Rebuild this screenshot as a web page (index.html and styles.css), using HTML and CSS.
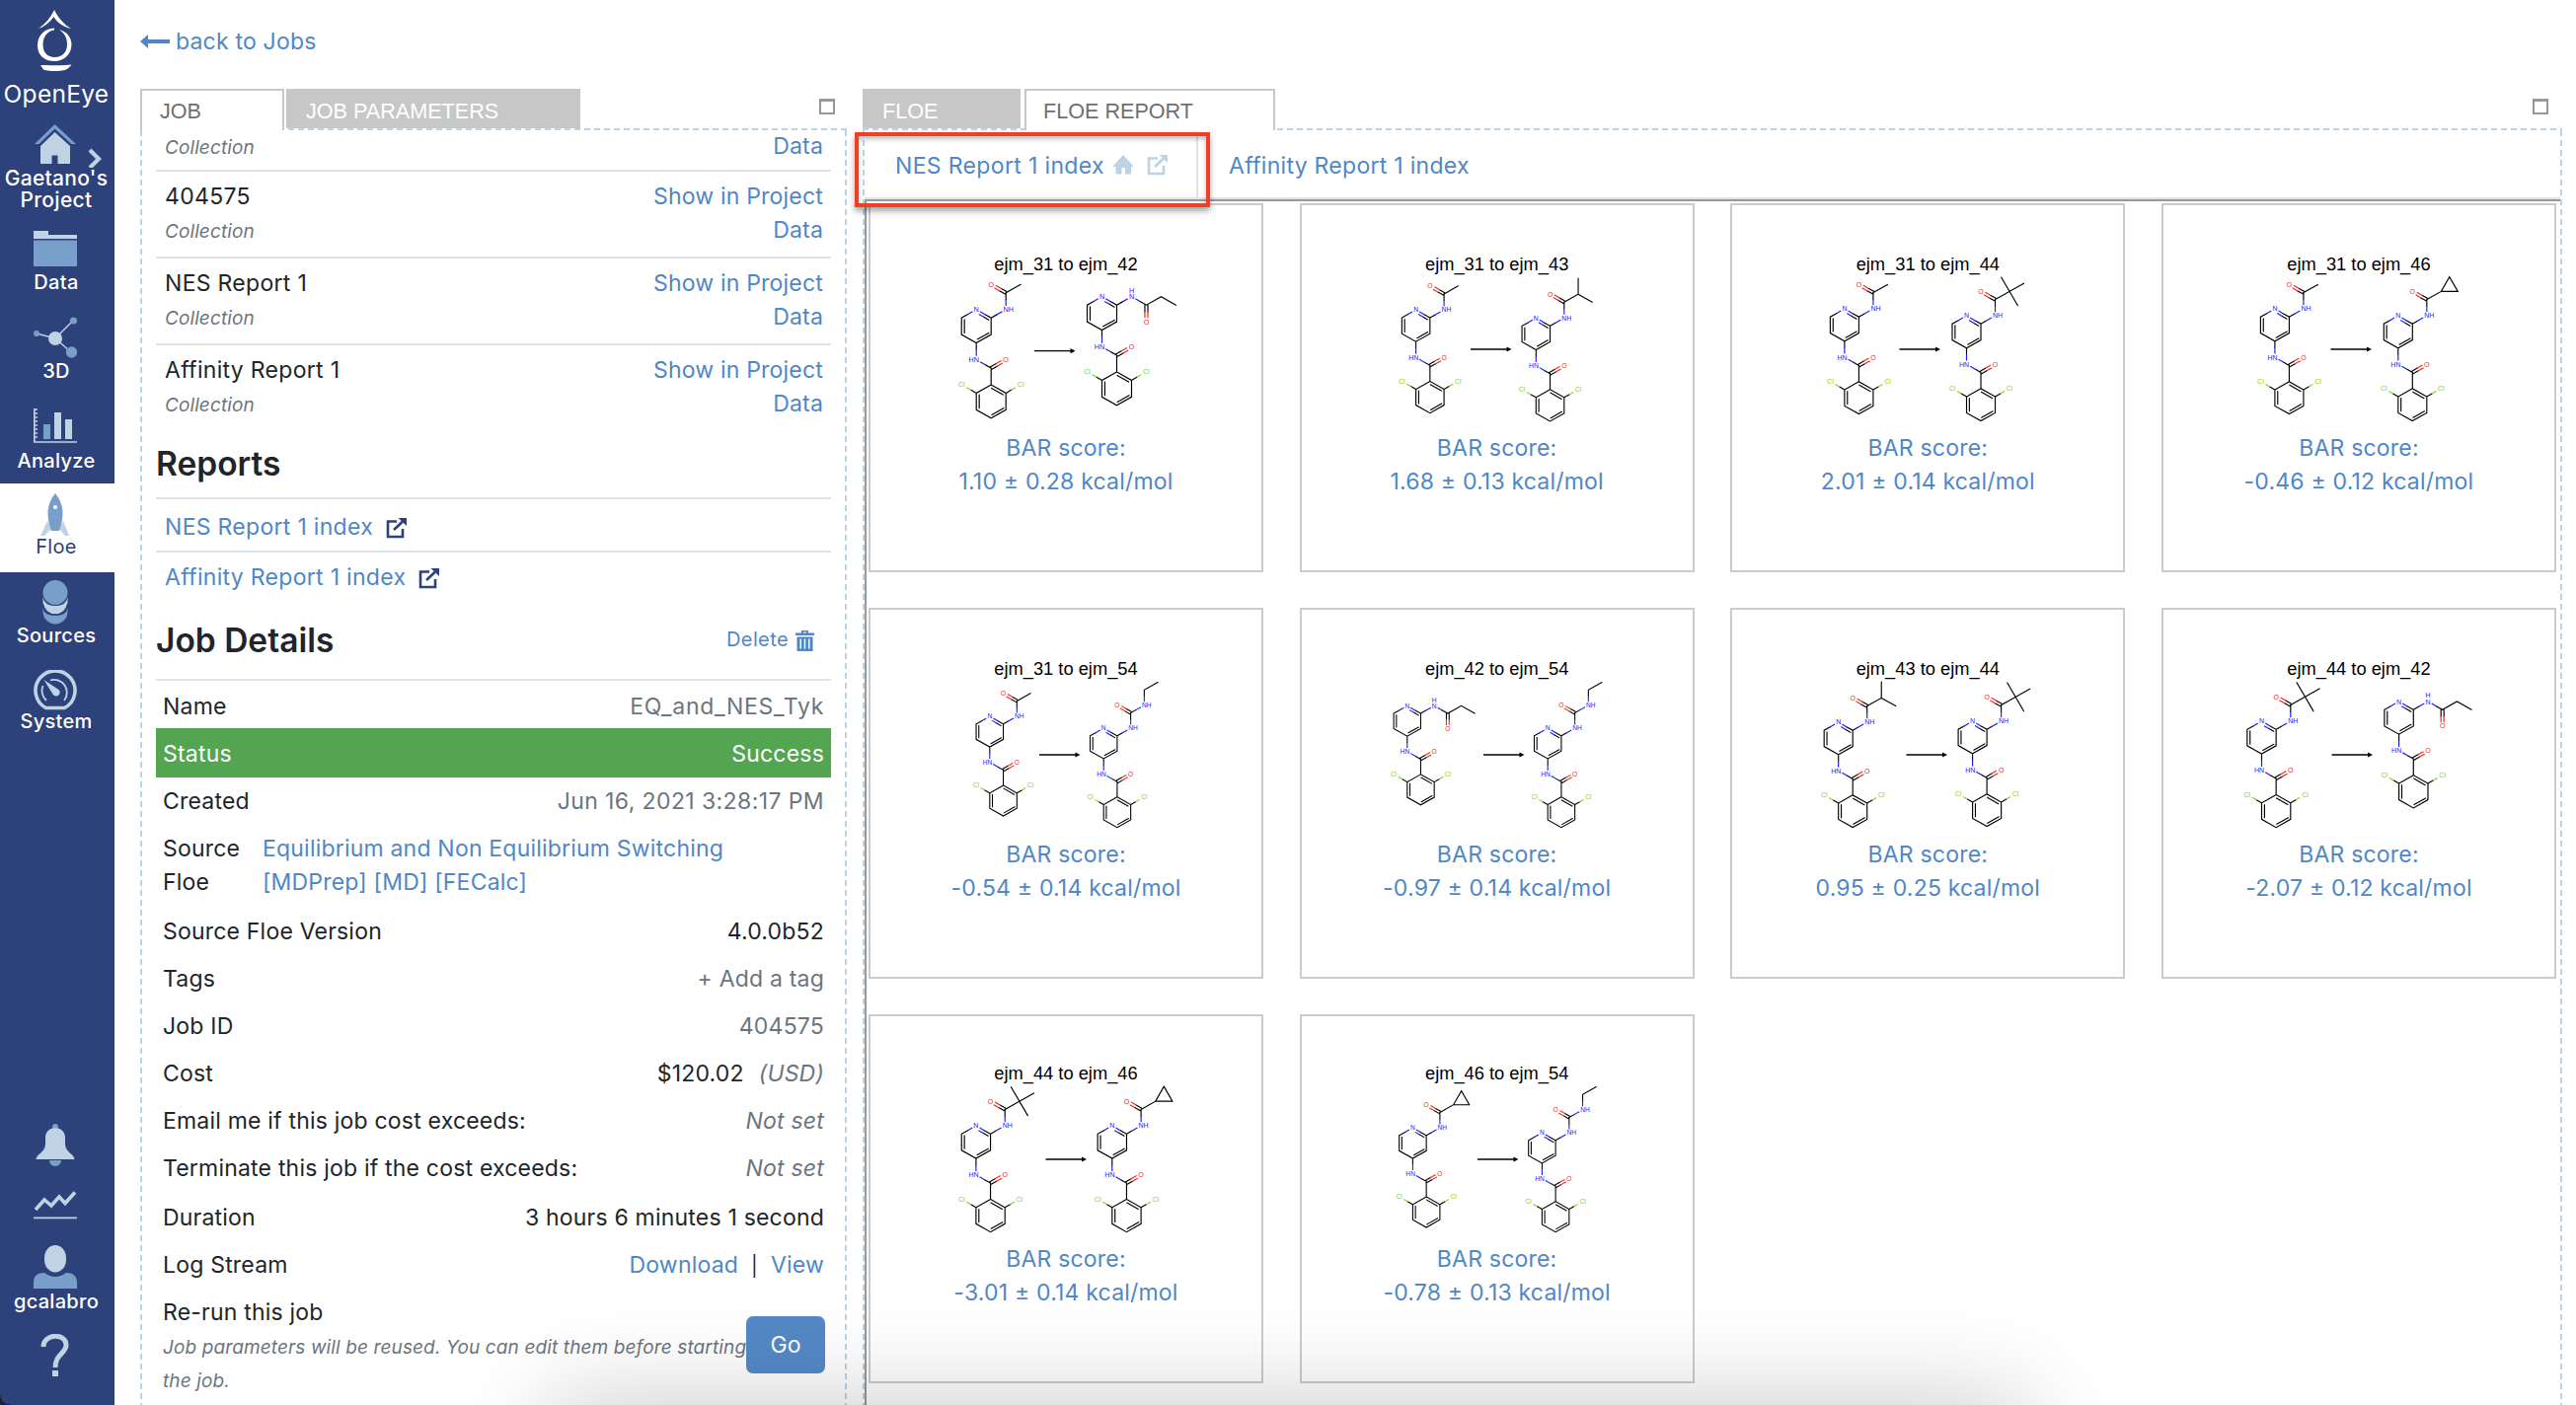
FILE: index.html
```html
<!DOCTYPE html>
<html lang="en">
<head>
<meta charset="utf-8">
<title>Floe – Job</title>
<link rel="stylesheet" href="styles.css">
</head>
<body>
<div class="app">
  <svg class="defs" width="0" height="0" aria-hidden="true">
    <defs>
      <g id="core">
        <path class="bk" d="M10 5.7L17.7 10V30L0 40L-17.7 30V10L-10 5.7M9 9L14.8 12.4M15 28L1.5 35.6M-14.2 28V12M17.7 10L24 6.4M0 40V48M11 66.3L17.7 70M16.9 68.5L23.2 64.9M18.6 71.5L24.9 67.9M17.7 70V90L35.4 100V120L17.7 130L0 120V100L17.7 90M18.2 94.1L32 102M32.5 118L18.5 126M3.5 118V102M35.4 100L41.7 96.4M0 100L-6.3 96.4"/>
        <path class="bl" d="M4.5 2.5L10 5.7M3 5.6L9 9M-4.5 2.5L-10 5.7M24 6.4L31 2.5M0 48V55.5M4.5 62.5L11 66.3"/>
        <path class="rd" d="M23.2 64.9L30 61.1M24.9 67.9L31.5 64.2"/>
        <path class="gr" d="M41.7 96.4L47 93.4M-6.3 96.4L-11.6 93.4"/>
        <text class="n" x="0" y="3" text-anchor="middle">N</text>
        <text class="n" x="3.2" y="63" text-anchor="end">HN</text>
        <text class="o" x="35.4" y="63" text-anchor="middle">O</text>
        <text class="c" x="53.1" y="93" text-anchor="middle">Cl</text>
        <text class="c" x="-17.7" y="93" text-anchor="middle">Cl</text>
      </g>
      <g id="amide">
        <use href="#core"/>
        <path class="bl" d="M35.4 -4.5V-12"/>
        <path class="bk" d="M35.4 -12V-20M36.2 -21.5L29.9 -25.1M34.5 -18.5L28.2 -22.1"/>
        <path class="rd" d="M29.9 -25.1L23.2 -28.9M28.2 -22.1L21.6 -25.8"/>
        <text class="n" x="32.3" y="3">NH</text>
        <text class="o" x="17.7" y="-27" text-anchor="middle">O</text>
      </g>
      <g id="m31"><use href="#amide"/><path class="bk" d="M35.4 -20L53.1 -30"/></g>
      <g id="m42">
        <use href="#core"/>
        <path class="bl" d="M39.9 2.5L46 6"/>
        <path class="bk" d="M46 6L53.1 10L70.8 0L88.5 10M51.3 10V18M54.9 10V18"/>
        <path class="rd" d="M51.3 18V25.5M54.9 18V25.5"/>
        <text class="n" x="35.4" y="3" text-anchor="middle">N</text>
        <text class="n" x="35.4" y="-4.4" text-anchor="middle">H</text>
        <text class="o" x="53.1" y="33" text-anchor="middle">O</text>
      </g>
      <g id="m43"><use href="#amide"/><path class="bk" d="M35.4 -20L53.1 -30V-50M53.1 -30L70.8 -20"/></g>
      <g id="m44"><use href="#amide"/><path class="bk" d="M35.4 -20L70.8 -40M42.9 -47.5L63.3 -12.5"/></g>
      <g id="m46"><use href="#amide"/><path class="bk" d="M35.4 -20L53.1 -30L63.4 -48L73.8 -30H53.1"/></g>
      <g id="m54">
        <use href="#amide"/>
        <path class="bk" d="M35.4 -20L42.5 -24M53.1 -42V-50L70.8 -60"/>
        <path class="bl" d="M42.5 -24L48.7 -27.5M53.1 -34.5V-42"/>
        <text class="n" x="50" y="-27">NH</text>
      </g>
      <g id="arrow"><path class="ar" d="M-41.500 0H-3"/><path d="M0 0L-5 -2.600V2.600Z"/></g>
      <g id="ext"><path d="M11 3.500H2V19H17V11M8 12L17 3.500" fill="none" stroke="currentColor" stroke-width="2.600"/><path d="M12.500 0H21V8Z" fill="currentColor"/></g>
    </defs>
  </svg>

  <nav class="side">
    <svg class="logo" width="40" height="66" viewBox="0 0 40 66"><g fill="#fff"><path d="M3 19C10 14 15 8 19 0C23 8 29 15 36 19C28 17 22 13 18.500 7C14 13 9 17 3 19Z"/><path fill-rule="evenodd" d="M19 18.500C9 19 2 26 2 36C2 46 9 52 19 52C29 52 36.500 45 36.500 35C36.500 28 32 22 24 20C30 24 32 29 32 35C32 43 27 48 19.500 48C12 48 7.500 43 7.500 35C7.500 28 12 21 19 20.500Z"/><path d="M5 56C15 55.500 26 57 36.500 55.500C33 60 31 61 27 61.500C19 62.500 12 62 8 60.500Z"/></g></svg>
    <span class="brand">OpenEye</span>
    <div class="item project">
      <svg width="76" height="44" viewBox="0 0 76 44"><path d="M1 20L21.500 0L43 20H38.500L21.500 4.500L5.500 20Z" fill="#789fc9"/><path d="M7 22L21.500 8L37 22V40H24.500V31.500H18.500V40H7Z" fill="#bfd3e4"/><path d="M57 26L66 35L57 44" fill="none" stroke="#bfd3e4" stroke-width="4.200"/></svg>
      <span>Gaetano's<br>Project</span>
    </div>
    <div class="item data">
      <svg width="44" height="36" viewBox="0 0 44 36"><path d="M0 0H15V4H44V8H0Z" fill="#bfd3e4"/><path d="M0 9.500H44V36H0Z" fill="#789fc9"/></svg>
      <span>Data</span>
    </div>
    <div class="item three">
      <svg width="44" height="42" viewBox="0 0 44 42"><path d="M3 17L22 22L40 4M22 22L38 36" stroke="#bfd3e4" stroke-width="1.500" fill="none"/><circle cx="22" cy="22" r="7" fill="#bfd3e4"/><g fill="#789fc9"><circle cx="3" cy="17" r="3"/><circle cx="40.500" cy="4" r="3.600"/><circle cx="38.500" cy="36" r="5.700"/></g></svg>
      <span>3D</span>
    </div>
    <div class="item analyze">
      <svg width="44" height="35" viewBox="0 0 44 35"><path d="M.8 0V34H44M1 1H4M1 5H4M1 9H4M1 13H4M1 17H4M1 21H4M1 25H4M1 29H4" stroke="#bfd3e4" stroke-width="1.600" fill="none"/><path d="M10 16H17V31H10Z" fill="#789fc9"/><path d="M21 4H28V31H21ZM32 11H39V31H32Z" fill="#bfd3e4"/></svg>
      <span>Analyze</span>
    </div>
    <div class="item floe">
      <svg width="30" height="43" viewBox="0 0 30 43"><path d="M7 28L0 43H4L11 36ZM23 28L29 43H25L19 36Z" fill="#bfd3e4"/><path fill-rule="evenodd" d="M15 0C20 6 22.500 13 22.500 20C22.500 27 21 33 19 38H11C9 33 7.500 27 7.500 20C7.500 13 10 6 15 0ZM15 12A2 2 0 1 0 15 16A2 2 0 1 0 15 12Z" fill="#789fc9"/></svg>
      <span>Floe</span>
    </div>
    <div class="item sources">
      <svg width="26" height="45" viewBox="0 0 26 45"><path d="M.5 28Q1.500 36 13 36T25.500 28V32A12.500 12.500 0 0 1 .5 32Z" fill="#789fc9"/><path d="M.5 17Q2 26 13 26T25.500 17V22A12.500 12.500 0 0 1 .5 22Z" fill="#bfd3e4"/><path d="M.5 24A12.600 12.600 0 0 0 25.500 24" fill="none" stroke="#2d417b" stroke-width="1.200"/><circle cx="13" cy="12.500" r="13.200" fill="#2d417b"/><circle cx="13" cy="12.500" r="12.500" fill="#789fc9"/></svg>
      <span>Sources</span>
    </div>
    <div class="item system">
      <svg width="44" height="41" viewBox="0 0 44 41"><path d="M12.500 38.500A20 20 0 1 1 31.500 38.500Z" fill="none" stroke="#bfd3e4" stroke-width="3.600"/><path d="M13 31A13 13 0 0 1 9.500 16M17 10.500A13 13 0 0 1 31 31" fill="none" stroke="#bfd3e4" stroke-width="1.800"/><path d="M10.500 10L25.500 20A3.800 3.800 0 1 1 19.500 24.500Z" fill="#bfd3e4"/></svg>
      <span>System</span>
    </div>
    <div class="low">
      <svg width="40" height="43" viewBox="0 0 40 43"><circle cx="20" cy="3" r="3" fill="#789fc9"/><path d="M14 37H26A6 6 0 0 1 14 37Z" fill="#789fc9"/><path d="M.5 36C1 30 9 30 10 21V14C10 1 30 1 30 14V21C31 30 39 30 39.500 36Z" fill="#bfd3e4"/></svg>
      <svg class="chart" width="44" height="29" viewBox="0 0 44 29"><path d="M2 19L11 9L18 15L26 6L32 12.500L42 1.500" fill="none" stroke="#bfd3e4" stroke-width="3.600"/><path d="M0 27.300H44" stroke="#bfd3e4" stroke-width="1.800"/></svg>
      <svg class="user" width="44" height="44" viewBox="0 0 44 44"><rect x="11" y="0" width="22" height="27.500" rx="11" ry="12.500" fill="#bfd3e4"/><path d="M0 44V38C0 31 4 28 11 28Q22 36 33 28C40 28 44 31 44 38V44Z" fill="#789fc9"/></svg>
      <span>gcalabro</span>
      <svg class="help" width="30" height="43" viewBox="0 0 30 43"><path d="M3 13C3 -1 26 -1 26 11C26 20 15 20 15 34" fill="none" stroke="#bfd3e4" stroke-width="5"/><rect x="12" y="37" width="6" height="6" fill="#bfd3e4"/></svg>
    </div>
  </nav>

  <main class="main">
    <a class="back"><svg width="30" height="14" viewBox="0 0 30 14"><path d="M0 7L8 0V5H30V9H8V14Z" fill="currentColor"/></svg><span>back to Jobs</span></a>
    <div class="panels">
      <section class="panel job">
        <div class="tabs"><span class="tab on t-job">JOB</span><span class="tab t-par">JOB PARAMETERS</span><i class="max"></i></div>
        <div class="pane">
          <div class="list">
            <div class="coll cut"><div><em>Collection</em></div><div class="r"><a>Data</a></div></div>
            <div class="coll"><div><b>404575</b><em>Collection</em></div><div class="r"><a>Show in Project</a><a>Data</a></div></div>
            <div class="coll"><div><b>NES Report 1</b><em>Collection</em></div><div class="r"><a>Show in Project</a><a>Data</a></div></div>
            <div class="coll"><div><b>Affinity Report 1</b><em>Collection</em></div><div class="r"><a>Show in Project</a><a>Data</a></div></div>
            <h2 class="h-rep">Reports</h2>
            <div class="rep first"><a>NES Report 1 index</a><svg width="22" height="21" viewBox="0 0 22 21"><use href="#ext"/></svg></div>
            <div class="rep"><a>Affinity Report 1 index</a><svg width="22" height="21" viewBox="0 0 22 21"><use href="#ext"/></svg></div>
            <div class="h-det"><h2>Job Details</h2><a class="del">Delete<svg width="19" height="21" viewBox="0 0 19 21"><path fill-rule="evenodd" fill="currentColor" d="M6 0H13V2.500H19V5H0V2.500H6ZM8 1.500V2.500H11V1.500ZM1.500 6.500H17.500V21H1.500ZM4.500 8.500V18.500H6V8.500ZM8.700 8.500V18.500H10.200V8.500ZM13 8.500V18.500H14.500V8.500Z"/></svg></a></div>
            <div class="row name"><span>Name</span><span class="m job-name">EQ_and_NES_Tyk</span></div>
            <div class="row status"><span>Status</span><span>Success</span></div>
            <div class="row"><span>Created</span><span class="m date">Jun 16, 2021 3:28:17 PM</span></div>
            <div class="row src"><span>Source<br>Floe</span><a>Equilibrium and Non Equilibrium Switching<br>[MDPrep] [MD] [FECalc]</a></div>
            <div class="row"><span>Source Floe Version</span><span>4.0.0b52</span></div>
            <div class="row"><span>Tags</span><span class="m">+ Add a tag</span></div>
            <div class="row"><span>Job ID</span><span class="m">404575</span></div>
            <div class="row"><span>Cost</span><span>$120.02<i class="m usd">(USD)</i></span></div>
            <div class="row"><span>Email me if this job cost exceeds:</span><i class="m">Not set</i></div>
            <div class="row"><span>Terminate this job if the cost exceeds:</span><i class="m">Not set</i></div>
            <div class="row dur"><span>Duration</span><span>3 hours 6 minutes 1 second</span></div>
            <div class="row"><span>Log Stream</span><span><a>Download</a><span class="bar">|</span><a>View</a></span></div>
            <div class="rerun"><div><span>Re-run this job</span><em>Job parameters will be reused. You can edit them before starting<br>the job.</em></div><button>Go</button></div>
          </div>
        </div>
      </section>

      <section class="panel report">
        <div class="tabs"><span class="tab t-floe">FLOE</span><span class="tab on t-rep">FLOE REPORT</span><i class="max"></i></div>
        <div class="pane">
          <div class="subtabs">
            <div class="sub on"><a>NES Report 1 index</a><svg width="20" height="20" viewBox="0 0 20 20"><path d="M10 0L20 11V12H18V19.500H12V13H8.500V19.500H2.500V12H0V11Z" fill="currentColor"/></svg><svg class="x" width="22" height="21" viewBox="0 0 22 21"><use href="#ext"/></svg><div class="mark"></div></div>
            <div class="sub other"><a>Affinity Report 1 index</a></div>
          </div>
          <div class="frame">
            <div class="card"><h3>ejm_31 to ejm_42</h3><svg viewBox="0 70 400 160"><use href="#m31" transform="translate(109.200 107.700) scale(.847)"/><use href="#m42" transform="translate(236.500 94.700) scale(.847)"/><use href="#arrow" x="209.500" y="149.700"/></svg><a>BAR score:<br>1.10 ± 0.28 kcal/mol</a></div>
            <div class="card"><h3>ejm_31 to ejm_43</h3><svg viewBox="0 70 400 160"><use href="#m31" transform="translate(117.600 108) scale(.805)"/><use href="#m43" transform="translate(239.300 116.300) scale(.805)"/><use href="#arrow" x="214.500" y="148"/></svg><a>BAR score:<br>1.68 ± 0.13 kcal/mol</a></div>
            <div class="card"><h3>ejm_31 to ejm_44</h3><svg viewBox="0 70 400 160"><use href="#m31" transform="translate(115.900 107) scale(.82)"/><use href="#m44" transform="translate(239.500 114) scale(.82)"/><use href="#arrow" x="213" y="148"/></svg><a>BAR score:<br>2.01 ± 0.14 kcal/mol</a></div>
            <div class="card"><h3>ejm_31 to ejm_46</h3><svg viewBox="0 70 400 160"><use href="#m31" transform="translate(114.900 107) scale(.82)"/><use href="#m46" transform="translate(239.800 114) scale(.82)"/><use href="#arrow" x="213" y="148"/></svg><a>BAR score:<br>-0.46 ± 0.12 kcal/mol</a></div>
            <div class="card mid"><h3>ejm_31 to ejm_54</h3><svg viewBox="0 70 400 160"><use href="#m31" transform="translate(122.800 110) scale(.777)"/><use href="#m54" transform="translate(238.200 122) scale(.775)"/><use href="#arrow" x="214.500" y="149"/></svg><a>BAR score:<br>-0.54 ± 0.14 kcal/mol</a></div>
            <div class="card mid"><h3>ejm_42 to ejm_54</h3><svg viewBox="0 70 400 160"><use href="#m42" transform="translate(108.800 99.300) scale(.773)"/><use href="#m54" transform="translate(251.200 122) scale(.775)"/><use href="#arrow" x="227.500" y="149"/></svg><a>BAR score:<br>-0.97 ± 0.14 kcal/mol</a></div>
            <div class="card mid"><h3>ejm_43 to ejm_44</h3><svg viewBox="0 70 400 160"><use href="#m43" transform="translate(109.700 116) scale(.82)"/><use href="#m44" transform="translate(245.600 115) scale(.82)"/><use href="#arrow" x="220" y="149"/></svg><a>BAR score:<br>0.95 ± 0.25 kcal/mol</a></div>
            <div class="card mid"><h3>ejm_44 to ejm_42</h3><svg viewBox="0 70 400 160"><use href="#m44" transform="translate(101.500 115) scale(.828)"/><use href="#m42" transform="translate(240.600 95) scale(.83)"/><use href="#arrow" x="214" y="149"/></svg><a>BAR score:<br>-2.07 ± 0.12 kcal/mol</a></div>
            <div class="card last"><h3>ejm_44 to ejm_46</h3><svg viewBox="0 70 400 160"><use href="#m44" transform="translate(108.900 115) scale(.828)"/><use href="#m46" transform="translate(246.800 115) scale(.828)"/><use href="#arrow" x="221" y="149"/></svg><a>BAR score:<br>-3.01 ± 0.14 kcal/mol</a></div>
            <div class="card last"><h3>ejm_46 to ejm_54</h3><svg viewBox="0 70 400 160"><use href="#m46" transform="translate(114.400 117) scale(.777)"/><use href="#m54" transform="translate(245.400 122) scale(.775)"/><use href="#arrow" x="221.500" y="149"/></svg><a>BAR score:<br>-0.78 ± 0.13 kcal/mol</a></div>
          </div>
        </div>
      </section>
    </div>
  </main>
  <div class="dock-shadow"></div>
</div>
</body>
</html>
```
FILE: styles.css
```css
* { box-sizing: border-box; }
body {
  margin: 0;
  background: #fff;
  color: #212529;
  font-family: Inter, "Liberation Sans", sans-serif;
  font-size: 23px;
  line-height: 34px;
  letter-spacing: 0.2px;
}
a { color: #4f87c7; text-decoration: none; }
svg { display: block; flex: none; }
.defs { position: absolute; }
.app { display: flex; width: 2610px; height: 1424px; position: relative; overflow: hidden; }

/* Navigation rail */
.side {
  width: 116px;
  flex: none;
  background:
    radial-gradient(circle at 100% 0, #2d417b 9px, #1a2238 10px) 0 100% / 10px 10px no-repeat,
    #2d417b;
  color: #fff;
  display: flex;
  flex-direction: column;
  align-items: center;
  font-size: 20px;
  line-height: 22px;
  letter-spacing: 0.3px;
  text-align: center;
  font-weight: 500;
  padding-top: 10px;
}
.side span { margin-right: 2px; }
.logo { margin-right: 4px; }
.brand { font-size: 24.5px; letter-spacing: 0.3px; line-height: 30px; margin-top: 4px; font-weight: 400; }
.item { display: flex; flex-direction: column; align-items: center; width: 100%; height: 90px; flex: none; }
.item span { margin-top: auto; }
.item svg { margin-right: 4px; }
.project { height: 98px; padding-top: 16px; }
.project svg { margin-right: -28px; }
.project span { margin-top: 0; font-size: 21px; }
.data { padding-top: 26px; padding-bottom: 1px; }
.three { padding-top: 23px; padding-bottom: 1px; }
.analyze { padding-top: 26px; padding-bottom: 1px; height: 91px; }
.floe { background: #fff; color: #2d417b; margin-top: 11px; padding-top: 10px; padding-bottom: 23px; font-weight: 400; }
.sources { padding-top: 8px; padding-bottom: 23px; }
.system { padding-top: 9px; padding-bottom: 25px; }
.low { margin-top: auto; display: flex; flex-direction: column; align-items: center; padding-bottom: 29px; }
.low svg { margin-right: 4px; }
.low .chart { margin-top: 25px; }
.low .user { margin-top: 26px; }
.low span { margin-top: 2px; }
.low .help { margin-top: 22px; }

/* Work area */
.main { flex: 1; padding-left: 26px; display: flex; flex-direction: column; }
.back { height: 90px; flex: none; display: flex; padding-top: 25px; gap: 6px; }
.back svg { margin-top: 10px; }
.panels { display: flex; gap: 16px; flex: 1; min-height: 0; }
.panel { display: flex; flex-direction: column; }
.job { width: 716px; }
.report { width: 1722px; }
.tabs {
  display: flex;
  height: 40px;
  flex: none;
  font-family: "Liberation Sans", Arial, sans-serif;
  font-size: 21.6px;
  letter-spacing: 0;
  line-height: 45px;
  z-index: 1;
}
.tab { background: #c7c7c7; color: #fff; height: 40px; padding-left: 20px; }
.tab.on { background: #fff; color: #6f6f6f; border: 2px solid #c8c8c8; border-bottom: 0; height: 42px; padding-left: 18px; line-height: 42px; }
.t-job { width: 146px; }
.t-par { width: 298px; margin-left: 2px; }
.t-floe { width: 160px; }
.tab.t-rep { width: 254px; margin-left: 4px; padding-left: 17px; }
.max { width: 16px; height: 16px; margin: 10px 12px 0 auto; border: 2px solid #999; border-top-width: 3px; }
.report .max { margin-right: 14px; }
.pane {
  flex: 1;
  min-height: 0;
  padding: 2px 2px 0;
  background:
    repeating-linear-gradient(90deg, #bcd3e5 0 6px, transparent 6px 10px) 0 0 / 100% 2px no-repeat,
    repeating-linear-gradient(180deg, transparent 0 2px, #bcd3e5 2px 8px, transparent 8px 10px) 0 0 / 2px 100% no-repeat,
    repeating-linear-gradient(180deg, transparent 0 2px, #bcd3e5 2px 8px, transparent 8px 10px) 100% 0 / 2px 100% no-repeat;
}

/* Job panel */
.list { padding: 0 14px; height: 1292px; overflow: hidden; }
.coll { border-top: 2px solid #dde2e6; height: 88px; padding: 8px 8px 0 9px; display: flex; justify-content: space-between; }
.coll.cut { border: 0; height: 41px; margin-top: -1px; padding-top: 0; }
.coll b { display: block; font-weight: 400; letter-spacing: 0.3px; }
em { display: block; font-size: 19px; color: #6c757d; letter-spacing: 0.1px; }
.coll em { line-height: 38px; }
.coll .r { display: flex; flex-direction: column; text-align: right; }
h2 { margin: 0; font-size: 33.5px; font-weight: 600; letter-spacing: 0; line-height: 40px; }
.h-rep { height: 68px; padding-top: 14px; }
.rep { border-top: 2px solid #dde2e6; height: 52px; padding: 8px 10px 0 9px; display: flex; gap: 13px; color: #2d417b; letter-spacing: 0.3px; }
.rep.first { height: 54px; padding-top: 11px; }
.rep svg { margin-top: 8px; }
.h-det { display: flex; justify-content: space-between; height: 80px; border-bottom: 2px solid #e2e4e6; padding: 19px 17px 0 0; }
.del { display: flex; gap: 7px; font-size: 20px; line-height: 39px; letter-spacing: 0.4px; }
.del svg { margin-top: 10px; }
.row { display: flex; justify-content: space-between; height: 48px; padding: 7px 7px 0 7px; }
.row.name { padding-top: 9px; }
.row.status { background: #54a551; color: #fff; height: 50px; padding-top: 9px; }
.row.src { height: 84px; justify-content: flex-start; }
.src span { width: 101px; }
.row.dur { height: 50px; padding-top: 9px; }
.m { color: #6c757d; }
.job-name { letter-spacing: 0.7px; }
.date { letter-spacing: 0.4px; }
.usd { margin-left: 15px; }
.bar { margin: 0 13px; font-size: 20px; }
.rerun { padding: 7px 6px 0 7px; display: flex; }
.rerun div { width: 591px; white-space: nowrap; }
.rerun em { margin-top: 2px; letter-spacing: 0.12px; }
button {
  width: 80px; height: 58px; flex: none; margin-top: 21px;
  border: 0; border-radius: 7px; background: #5489c7; color: #fff;
  font: inherit;
}

/* Report panel */
.subtabs { display: flex; height: 70px; border-bottom: 2px solid #dde4ea; letter-spacing: 0.35px; }
.sub { display: flex; padding: 19px 31px 0; }
.sub.other { letter-spacing: 0.28px; }
.sub.on { position: relative; width: 338px; border-right: 2px solid #dde2e8; border-radius: 0 6px 0 0; color: #bcd3e5; padding-right: 0; }
.sub.on svg { margin: 6px 0 0 9px; }
.sub.on .x { margin-left: 14px; }
.mark {
  position: absolute; left: -10px; top: 2px; width: 360px; height: 76px;
  border: 4px solid #f03f22; box-shadow: 0 4px 6px rgba(0,0,0,.35), inset 0 3px 5px rgba(0,0,0,.25);
}
.frame {
  border-left: 2px solid #999;
  border-top: 2px solid #999;
  height: 1222px;
  padding: 2px 0 0 2px;
  display: grid;
  grid-template-columns: repeat(4, 400px);
  grid-template-rows: 374px 376px 374px;
  column-gap: 36.67px;
  row-gap: 36px;
}
.card {
  border: 2px solid #ccc;
  display: flex;
  flex-direction: column;
  align-items: center;
  text-align: center;
}
.card h3 {
  margin: 50px 0 0;
  font: 400 18.3px/20px "Liberation Sans", Arial, sans-serif;
  letter-spacing: 0;
  color: #000;
}
.card svg { width: 400px; height: 160px; margin: -2px -2px 0; overflow: visible; }
.card > a { margin-top: 1px; }
.mid > a { margin-top: 3px; }
.last h3 { margin-top: 48px; }
.last > a { margin-top: 3px; }
.bk, .bl, .rd, .gr { fill: none; stroke-width: 1.4; }
.bk { stroke: #000; stroke-linecap: round; }
.bl { stroke: #1a1aff; }
.rd { stroke: #e8291f; }
.gr { stroke: #86d02c; }
.ar { stroke: #000; stroke-width: 1.3; }
.n, .o, .c { font: 8.5px "Liberation Sans", Arial, sans-serif; letter-spacing: 0; }
.n { fill: #1a1aff; }
.o { fill: #e8291f; }
.c { fill: #86d02c; }

/* Soft shade along the bottom edge of the window */
.dock-shadow {
  position: absolute; left: 580px; right: 580px; top: 1442px; height: 60px;
  box-shadow: 0 0 100px 24px rgba(0,0,0,.2);
  pointer-events: none;
}
```
